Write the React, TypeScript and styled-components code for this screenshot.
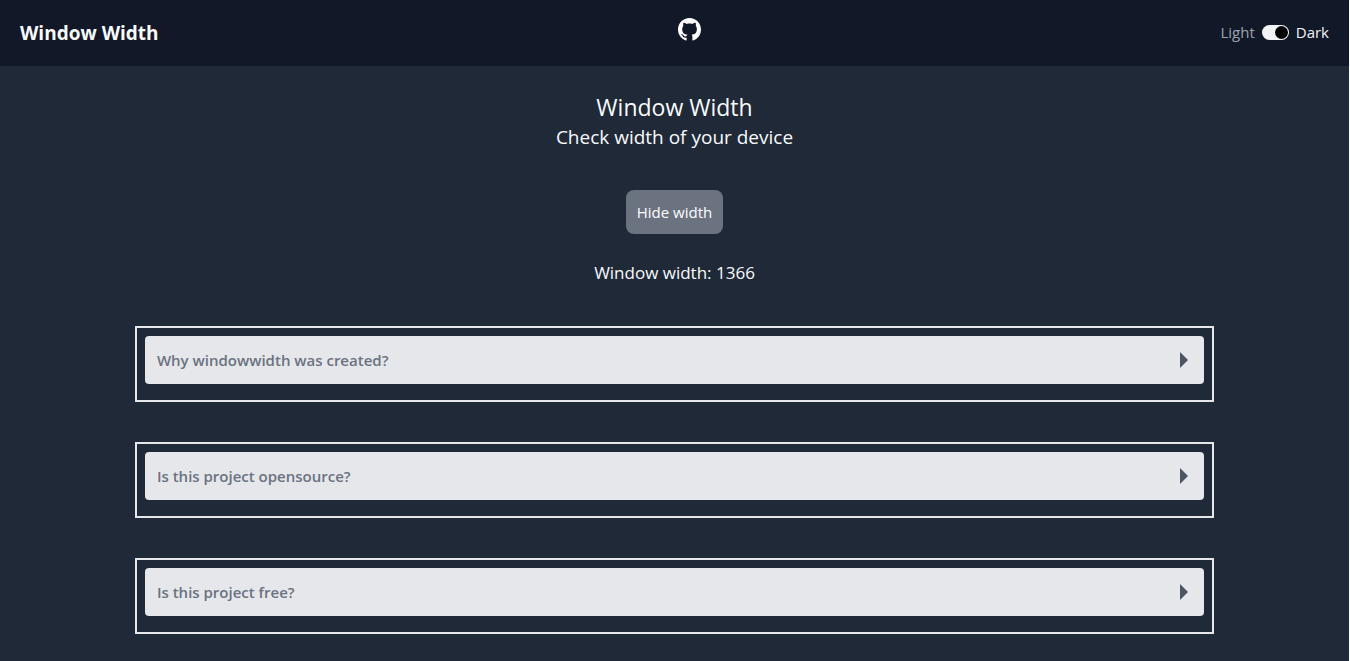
import React, { useState } from "react";
import styled, { createGlobalStyle } from "styled-components";

const GlobalStyle = createGlobalStyle`
  *, *::before, *::after { box-sizing: border-box; }
  html { background: #f9fafb; }
  body {
    margin: 0;
    padding-right: 1px;
    font-family: "Segoe UI", "Open Sans", "Noto Sans", sans-serif;
    font-size: 15px;
    line-height: 24px;
    color: #f9fafb;
  }
  button, input { font: inherit; }
  h1, h2, p { margin: 0; font-weight: 400; }
`;

const Page = styled.div`
  min-height: 100vh;
  background: #1f2937;
`;

const Header = styled.header`
  display: flex;
  align-items: center;
  justify-content: space-between;
  height: 66px;
  padding: 0 20px;
  background: #111827;
`;

const Brand = styled.a`
  font-size: 19px;
  font-weight: 700;
  line-height: 28px;
  color: inherit;
  text-decoration: none;
`;

const RepoLink = styled.a`
  display: flex;
  padding-bottom: 8px;
  color: #ffffff;
`;

const ThemeSwitch = styled.label`
  display: flex;
  align-items: center;
  gap: 7px;
  padding-bottom: 2px;
`;

const ThemeName = styled.span<{ $muted?: boolean }>`
  color: ${(p) => (p.$muted ? "#9ca3af" : "#f3f4f6")};
`;

const Toggle = styled.input`
  appearance: none;
  display: flex;
  justify-content: flex-start;
  width: 27px;
  height: 15px;
  margin: 0;
  padding: 1px;
  border-radius: 8px;
  background: #f3f4f6;
  cursor: pointer;

  &::before {
    content: "";
    width: 13px;
    height: 13px;
    border-radius: 50%;
    background: #000000;
  }
  &:checked { justify-content: flex-end; }
`;

const Intro = styled.section`
  display: flex;
  flex-direction: column;
  align-items: center;
  padding-top: 25px;
  text-align: center;
`;

const Title = styled.h1`
  font-size: 23px;
  line-height: 32px;
`;

const Subtitle = styled.h2`
  font-size: 19px;
  line-height: 28px;
`;

const WidthButton = styled.button`
  height: 44px;
  margin: 39px 0 25px;
  padding: 0 11px;
  border: 0;
  border-radius: 8px;
  background: #6b7280;
  color: #ffffff;
  cursor: pointer;
`;

const WidthText = styled.p`
  font-size: 17px;
  line-height: 28px;
`;

const Questions = styled.section`
  display: flex;
  flex-direction: column;
  gap: 40px;
  width: 80%;
  margin: 0 auto;
  padding: 39px 0 27px;
`;

const QuestionCard = styled.div`
  padding: 8px 8px 16px;
  border: 2px solid #e5e7eb;
`;

const QuestionButton = styled.button`
  display: flex;
  align-items: center;
  justify-content: space-between;
  width: 100%;
  height: 48px;
  padding: 0 16px 0 12px;
  border: 0;
  border-radius: 4px;
  background: #e5e7eb;
  color: #6b7280;
  font-weight: 600;
  text-align: left;
  cursor: pointer;
`;

const Arrow = styled.svg<{ $open: boolean }>`
  color: #4b5563;
  transform: rotate(${(p) => (p.$open ? 90 : 0)}deg);
`;

const Answer = styled.p`
  padding: 12px 12px 0;
`;

const faqs = [
  {
    question: "Why windowwidth was created?",
    answer: "To check the width of a device quickly.",
  },
  { question: "Is this project opensource?", answer: "Yes." },
  { question: "Is this project free?", answer: "Yes." },
];

function GithubIcon() {
  return (
    <svg width="23" height="23" viewBox="0 0 16 16" fill="currentColor" aria-hidden="true">
      <path d="M8 0C3.58 0 0 3.58 0 8c0 3.54 2.29 6.53 5.47 7.59.4.07.55-.17.55-.38 0-.19-.01-.82-.01-1.49-2.01.37-2.53-.49-2.69-.94-.09-.23-.48-.94-.82-1.13-.28-.15-.68-.52-.01-.53.63-.01 1.08.58 1.23.82.72 1.21 1.87.87 2.33.66.07-.52.28-.87.51-1.07-1.78-.2-3.64-.89-3.64-3.95 0-.87.31-1.59.82-2.15-.08-.2-.36-1.02.08-2.12 0 0 .67-.21 2.2.82.64-.18 1.32-.27 2-.27s1.36.09 2 .27c1.53-1.04 2.2-.82 2.2-.82.44 1.1.16 1.92.08 2.12.51.56.82 1.27.82 2.15 0 3.07-1.87 3.75-3.65 3.95.29.25.54.73.54 1.48 0 1.07-.01 1.93-.01 2.2 0 .21.15.46.55.38A8.01 8.01 0 0 0 16 8c0-4.42-3.58-8-8-8z" />
    </svg>
  );
}

function Faq({ question, answer }: { question: string; answer: string }) {
  const [open, setOpen] = useState(false);
  return (
    <QuestionCard>
      <QuestionButton type="button" aria-expanded={open} onClick={() => setOpen(!open)}>
        {question}
        <Arrow $open={open} width="8" height="16" viewBox="0 0 8 16" fill="currentColor" aria-hidden="true">
          <path d="M0 0L8 8L0 16Z" />
        </Arrow>
      </QuestionButton>
      {open && <Answer>{answer}</Answer>}
    </QuestionCard>
  );
}

export default function App() {
  const [shown, setShown] = useState(true);
  const [dark, setDark] = useState(true);

  return (
    <>
      <GlobalStyle />
      <Page>
        <Header>
          <Brand href="#">Window Width</Brand>
          <RepoLink href="#" aria-label="GitHub">
            <GithubIcon />
          </RepoLink>
          <ThemeSwitch>
            <ThemeName $muted={dark}>Light</ThemeName>
            <Toggle
              type="checkbox"
              role="switch"
              checked={dark}
              onChange={(e) => setDark(e.target.checked)}
            />
            <ThemeName $muted={!dark}>Dark</ThemeName>
          </ThemeSwitch>
        </Header>
        <main>
          <Intro>
            <Title>Window Width</Title>
            <Subtitle>Check width of your device</Subtitle>
            <WidthButton type="button" onClick={() => setShown(!shown)}>
              {shown ? "Hide width" : "Show width"}
            </WidthButton>
            {shown && <WidthText>Window width: 1366</WidthText>}
          </Intro>
          <Questions>
            {faqs.map((faq) => (
              <Faq key={faq.question} {...faq} />
            ))}
          </Questions>
        </main>
      </Page>
    </>
  );
}
